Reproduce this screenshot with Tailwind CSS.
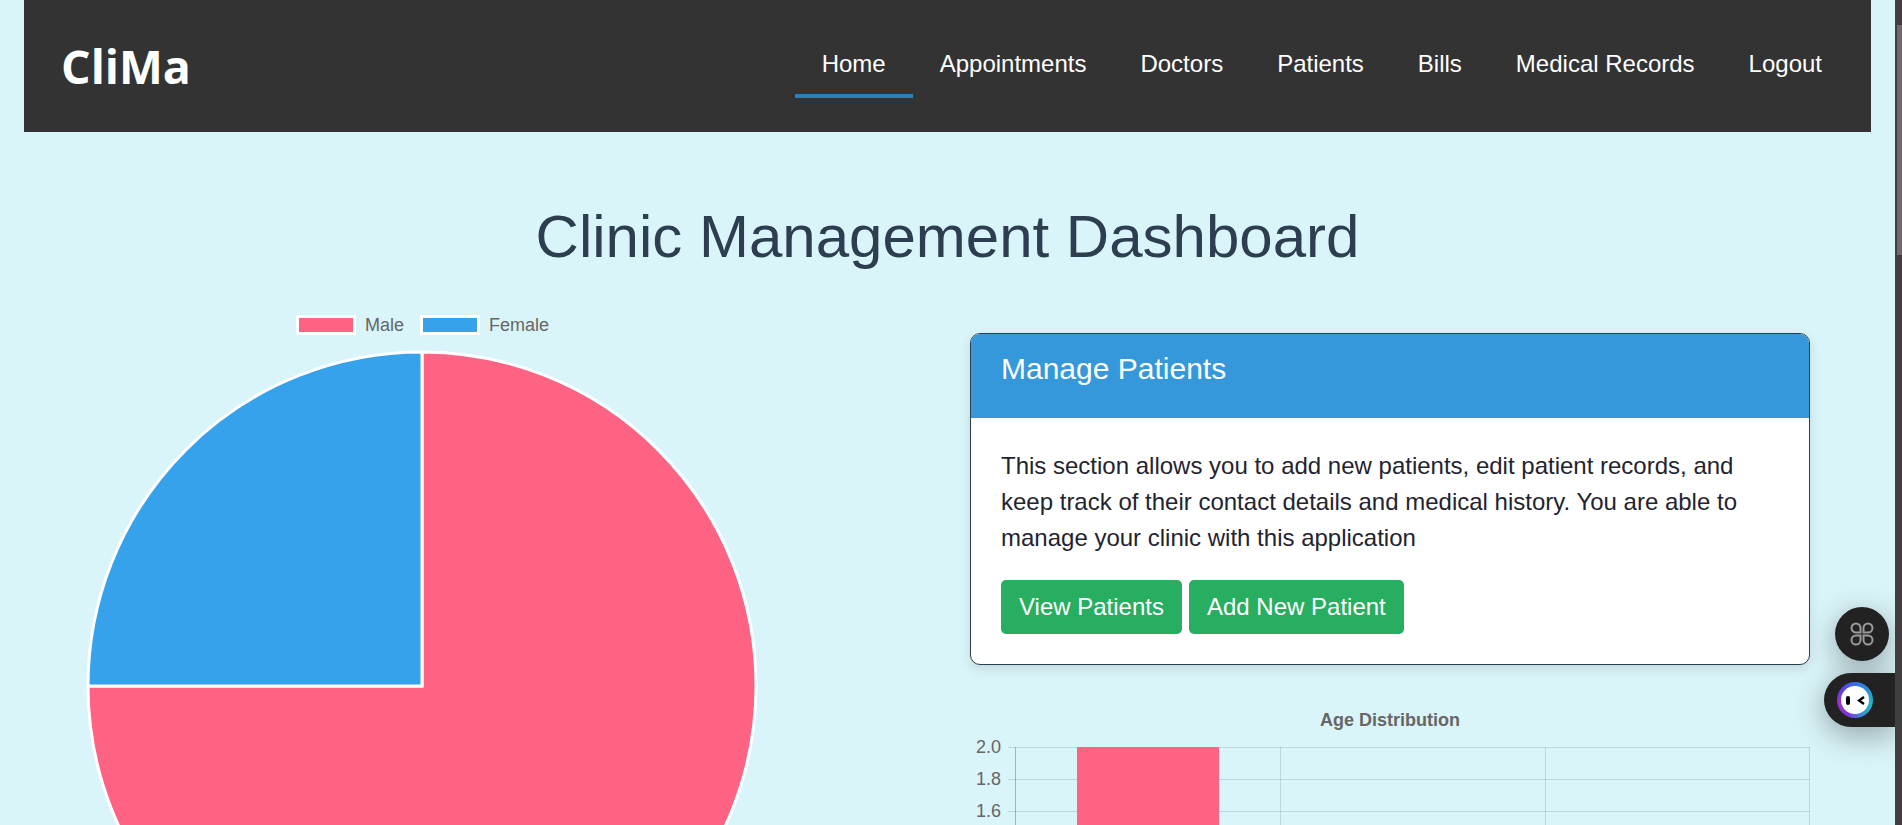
<!DOCTYPE html>
<html lang="en">
<head>
    <meta charset="UTF-8">
    <meta name="viewport" content="width=device-width, initial-scale=1.0">
    <title>Clinic Management Dashboard</title>
    <script src="https://cdn.jsdelivr.net/npm/@tailwindcss/browser@4"></script>
</head>
<body class="bg-[#daf5f9] font-['Liberation_Sans',Arial,sans-serif] h-[825px] overflow-hidden">
    <!-- Navbar -->
    <nav class="ml-[24px] w-[1847px] h-[132px] bg-[#333333] flex items-center justify-between pl-[37px] pr-[22px]">
        <a class="font-['Open_Sans',sans-serif] font-bold text-[46.5px] text-white mt-[2px]">CliMa</a>
        <ul class="flex items-center text-[24px] leading-[28px] text-white">
            <li class="px-[27px] pt-[16px] pb-[16px] border-b-[4px] border-[#2980b9]">Home</li>
            <li class="px-[27px] pt-[16px] pb-[20px]">Appointments</li>
            <li class="px-[27px] pt-[16px] pb-[20px]">Doctors</li>
            <li class="px-[27px] pt-[16px] pb-[20px]">Patients</li>
            <li class="px-[27px] pt-[16px] pb-[20px]">Bills</li>
            <li class="px-[27px] pt-[16px] pb-[20px]">Medical Records</li>
            <li class="px-[27px] pt-[16px] pb-[20px]">Logout</li>
        </ul>
    </nav>

    <h1 class="text-center text-[60px] leading-[72px] text-[#2c3e50] mt-[69px] ml-[-7px]">Clinic Management Dashboard</h1>

    <main class="flex mt-[42px] pl-[24px]">
        <!-- Gender pie -->
        <section class="w-[800px] shrink-0">
            <div class="flex justify-center items-center text-[18px] text-[#666666] w-[797px] h-[20px]">
                <span class="w-[60px] h-[20px] bg-[#ff6384] border-[3px] border-white"></span><span class="ml-[9px] mr-[16px]">Male</span>
                <span class="w-[60px] h-[20px] bg-[#36a2eb] border-[3px] border-white"></span><span class="ml-[9px]">Female</span>
            </div>
            <svg class="mt-[15px]" width="797" height="700" viewBox="0 0 797 700">
                <path d="M398 336 L398 2 A334 334 0 1 1 64 336 Z" fill="#ff6384" stroke="#fff" stroke-width="3"/>
                <path d="M398 336 L64 336 A334 334 0 0 1 398 2 Z" fill="#36a2eb" stroke="#fff" stroke-width="3"/>
            </svg>
        </section>

        <!-- Right column -->
        <section class="ml-[146px] w-[840px] shrink-0 pt-[18px]">
            <div class="rounded-[10px] border border-[#2c3e50] bg-white overflow-hidden shadow-[0_4px_12px_rgba(0,0,0,0.12)]">
                <div class="bg-[#3498db] h-[84px] px-[30px] pt-[17px] text-[30px] leading-[36px] text-white">Manage Patients</div>
                <div class="px-[30px] pt-[30px] pb-[30px]">
                    <p class="text-[#1f2430] text-[24px] leading-[36px] mb-[24px]">This section allows you to add new patients, edit patient records, and keep track of their contact details and medical history. You are able to manage your clinic with this application</p>
                    <div class="flex gap-[7px]">
                        <button class="bg-[#27ae60] text-white text-[24px] h-[54px] px-[18px] rounded-[5px]">View Patients</button>
                        <button class="bg-[#27ae60] text-white text-[24px] h-[54px] px-[18px] rounded-[5px]">Add New Patient</button>
                    </div>
                </div>
            </div>

            <!-- Age chart -->
            <svg class="mt-[42px] ml-[-2px]" width="845" height="140" viewBox="0 0 845 140" font-family="Liberation Sans, Arial, sans-serif" fill="#666">
                <text x="422" y="19" text-anchor="middle" font-weight="bold" font-size="18">Age Distribution</text>
                <g stroke="#000" stroke-opacity="0.12" stroke-width="1">
                    <path d="M40 40.5H842M40 72.5H842M40 104.5H842M40 136.5H842"/>
                    <path d="M312.5 40V140M577.5 40V140M841.5 40V140"/>
                </g>
                <path d="M47.5 40V140" stroke="#000" stroke-opacity="0.25"/>
                <rect x="109" y="40" width="142" height="100" fill="#ff6384"/>
                <g font-size="18" text-anchor="end">
                    <text x="33" y="46">2.0</text>
                    <text x="33" y="78">1.8</text>
                    <text x="33" y="110">1.6</text>
                </g>
            </svg>
        </section>
    </main>

    <!-- Floating widgets + scrollbar -->
    <div class="fixed right-[13px] top-[607px] w-[54px] h-[54px] rounded-full bg-[#222222] shadow-[0_8px_32px_rgba(0,0,0,0.35)] flex items-center justify-center">
        <svg width="24" height="24" viewBox="0 0 24 24" fill="none" stroke="#9a9a9a" stroke-width="2"><path d="M10.5 10.5H6A4.5 4.5 0 1 1 10.5 6ZM13.5 10.5V6A4.5 4.5 0 1 1 18 10.5ZM10.5 13.5V18A4.5 4.5 0 1 1 6 13.5ZM13.5 13.5H18A4.5 4.5 0 1 1 13.5 18Z"/></svg>
    </div>
    <div class="fixed right-[7px] top-[673px] w-[71px] h-[54px] rounded-l-full bg-[#222222] shadow-[0_8px_32px_rgba(0,0,0,0.35)] flex items-center pl-[13px]">
        <span class="w-[36px] h-[36px] rounded-full bg-[conic-gradient(#3a6fe8,#2b8fd8,#22b8c8,#3a8fd8,#7a35d8,#a030c8,#5b3fe0,#3a6fe8)] flex items-center justify-center">
            <span class="w-[28px] h-[28px] rounded-full bg-white flex items-center justify-center gap-[7px]">
                <span class="w-[4px] h-[9px] rounded-full bg-black"></span>
                <svg width="8" height="9" viewBox="0 0 8 9"><path d="M7 1 L2 4.5 L7 8" fill="none" stroke="#000" stroke-width="2.4"/></svg>
            </span>
        </span>
    </div>
    <div class="fixed right-0 top-0 w-[7px] h-full bg-[#3f3f3f]">
        <div class="ml-[2px] mt-[25px] h-[230px] bg-[#6b6b6b]"></div>
    </div>
</body>
</html>
